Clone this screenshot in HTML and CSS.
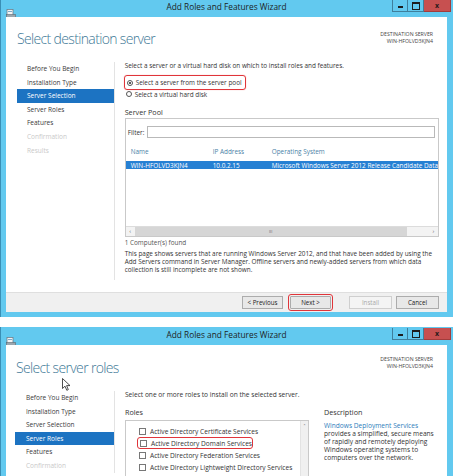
FILE: index.html
```html
<!DOCTYPE html>
<html lang="en">
  <head>
    <meta charset="UTF-8" />
    <meta name="viewport" content="width=device-width, initial-scale=1.0" />
    <title>Add Roles and Features Wizard</title>
    <link rel="stylesheet" href="styles.css">
  </head>
  <body>
    <!-- first capture: destination server -->
    <section class="window win-one">
      <header class="titlebar">
        <span class="app-icon">
          <svg width="10" height="10" viewBox="0 0 10 10">
            <rect x="1" y="0.5" width="6" height="6" fill="#f4f4f4" stroke="#6f7f8c" stroke-width="0.8" />
            <rect x="2" y="2" width="4" height="1" fill="#7ea9c8" />
            <rect x="0.5" y="5.5" width="9" height="4" fill="#9aa6ae" stroke="#5d6a74" stroke-width="0.6" />
          </svg>
        </span>
        <span class="title">Add Roles and Features Wizard</span>
        <span class="controls">
          <span class="ctl ctl-min"></span>
          <span class="ctl ctl-max"></span>
          <span class="ctl ctl-close">x</span>
        </span>
      </header>
      <div class="client">
        <div class="head">
          <h1>Select destination server</h1>
          <div class="dest">
            <div>DESTINATION SERVER</div>
            <div>WIN-HFOLVD3KJN4</div>
          </div>
        </div>
        <div class="wizard">
          <ul class="steps">
            <li>Before You Begin</li>
            <li>Installation Type</li>
            <li class="current">Server Selection</li>
            <li>Server Roles</li>
            <li>Features</li>
            <li class="off">Confirmation</li>
            <li class="off">Results</li>
          </ul>
          <div class="main">
            <p class="intro">Select a server or a virtual hard disk on which to install roles and features.</p>
            <div class="choices">
              <label class="radio marked"><span class="dot on"></span>Select a server from the server pool</label>
              <label class="radio"><span class="dot"></span>Select a virtual hard disk</label>
            </div>
            <h2 class="sub">Server Pool</h2>
            <div class="pool">
              <div class="filter">
                <span>Filter:</span>
                <span class="field"></span>
              </div>
              <div class="row cols">
                <span class="c-name">Name</span>
                <span class="c-ip">IP Address</span>
                <span class="c-os">Operating System</span>
              </div>
              <div class="row picked">
                <span class="c-name">WIN-HFOLVD3KJN4</span>
                <span class="c-ip">10.0.2.15</span>
                <span class="c-os">Microsoft Windows Server 2012 Release Candidate Data</span>
              </div>
              <div class="hscroll">
                <span class="arrow">&lsaquo;</span>
                <span class="thumb">III</span>
                <span class="track"></span>
                <span class="arrow">&rsaquo;</span>
              </div>
            </div>
            <p class="found">1 Computer(s) found</p>
            <p class="note">This page shows servers that are running Windows Server 2012, and that have been added by using the Add Servers command in Server Manager. Offline servers and newly-added servers from which data collection is still incomplete are not shown.</p>
          </div>
        </div>
      </div>
      <footer class="actions">
        <span class="btn">&lt; Previous</span>
        <span class="btn next">Next &gt;</span>
        <span class="btn disabled">Install</span>
        <span class="btn">Cancel</span>
      </footer>
    </section>

    <!-- second capture: server roles -->
    <section class="window win-two">
      <header class="titlebar">
        <span class="app-icon">
          <svg width="10" height="10" viewBox="0 0 10 10">
            <rect x="1" y="0.5" width="6" height="6" fill="#f4f4f4" stroke="#6f7f8c" stroke-width="0.8" />
            <rect x="2" y="2" width="4" height="1" fill="#7ea9c8" />
            <rect x="0.5" y="5.5" width="9" height="4" fill="#9aa6ae" stroke="#5d6a74" stroke-width="0.6" />
          </svg>
        </span>
        <span class="title">Add Roles and Features Wizard</span>
        <span class="controls">
          <span class="ctl ctl-min"></span>
          <span class="ctl ctl-max"></span>
          <span class="ctl ctl-close">x</span>
        </span>
      </header>
      <div class="client">
        <div class="head">
          <h1>Select server roles</h1>
          <div class="dest">
            <div>DESTINATION SERVER</div>
            <div>WIN-HFOLVD3KJN4</div>
          </div>
          <svg class="pointer" width="9" height="13" viewBox="0 0 9 13">
            <path d="M0.5 0.5 L0.5 10.5 L3 8.2 L4.8 12.3 L6.3 11.6 L4.6 7.6 L8 7.6 Z" fill="#fff" stroke="#222" stroke-width="0.8" stroke-linejoin="round" />
          </svg>
        </div>
        <div class="wizard">
          <ul class="steps">
            <li>Before You Begin</li>
            <li>Installation Type</li>
            <li>Server Selection</li>
            <li class="current">Server Roles</li>
            <li>Features</li>
            <li class="off">Confirmation</li>
          </ul>
          <div class="main">
            <p class="intro">Select one or more roles to install on the selected server.</p>
            <div class="roles-area">
              <div class="roles">
                <h2 class="sub">Roles</h2>
                <div class="role-list">
                  <ul>
                    <li><span class="box"></span>Active Directory Certificate Services</li>
                    <li class="marked"><span class="box"></span>Active Directory Domain Services</li>
                    <li><span class="box"></span>Active Directory Federation Services</li>
                    <li><span class="box"></span>Active Directory Lightweight Directory Services</li>
                  </ul>
                  <div class="vscroll"><span class="arrow">&#708;</span></div>
                </div>
              </div>
              <div class="desc">
                <h2 class="sub">Description</h2>
                <p><a>Windows Deployment Services</a>provides a simplified, secure means<br>of rapidly and remotely deploying<br>Windows operating systems to<br>computers over the network.</p>
              </div>
            </div>
          </div>
        </div>
      </div>
    </section>
  </body>
</html>
```

FILE: styles.css
```css
* {
  margin: 0;
  padding: 0;
  box-sizing: border-box;
}

body {
  font-family: "Open Sans", "DejaVu Sans", sans-serif;
  background-color: #fff;
  color: #333;
  width: 453px;
  height: 476px;
  overflow: hidden;
  display: flex;
  flex-direction: column;
  gap: 10px;
}

ul {
  list-style: none;
}

.window {
  background-color: #62c9ef;
  border-left: 1px solid #3a8fb5;
  padding: 0 6px 5px 5px;
  display: flex;
  flex-direction: column;
  flex-shrink: 0;
}

.win-one {
  height: 317px;
}

.win-two {
  flex: 1;
  padding-bottom: 0;
}

/* title bar */
.titlebar {
  display: grid;
  grid-template-columns: 1fr auto 1fr;
  align-items: start;
  height: 17px;
}

.win-two .titlebar {
  height: 18px;
  padding-top: 1px;
}

.app-icon {
  padding: 2px 0 0 0;
  height: 12px;
}

.title {
  font-size: 8.3px;
  line-height: 14px;
  color: #1d1d1d;
}

.controls {
  display: flex;
  justify-content: flex-end;
  margin-right: -4px;
}

.ctl {
  width: 16px;
  height: 12px;
  border: 1px solid #3f7f9c;
  border-top: none;
  display: flex;
  align-items: center;
  justify-content: center;
}

.ctl + .ctl {
  border-left: none;
}

.ctl-min::after {
  content: "";
  width: 5px;
  height: 2px;
  background-color: #1d1d1d;
  margin-top: 3px;
}

.ctl-max::after {
  content: "";
  width: 6px;
  height: 5px;
  border: 1px solid #1d1d1d;
  border-top-width: 2px;
}

.ctl-close {
  width: 27px;
  background-color: #c75050;
  border-color: #a23c3c;
  font-size: 7px;
  font-weight: 700;
  color: #2a1a1a;
}

/* client area */
.client {
  background-color: #fff;
  flex: 1;
  display: flex;
  flex-direction: column;
  overflow: hidden;
}

.head {
  display: flex;
  justify-content: space-between;
  height: 45px;
  padding: 12px 14px 0 11px;
  position: relative;
}

.win-two .head {
  height: 46px;
  padding: 13px 14px 0 10px;
}

h1 {
  font-size: 14px;
  font-weight: 300;
  line-height: 20px;
  color: #3e7896;
  letter-spacing: -0.65px;
  white-space: nowrap;
}

.dest {
  font-size: 5.2px;
  line-height: 7px;
  text-align: right;
  color: #444;
  padding-top: 2px;
}

.win-two .dest {
  margin-top: -4px;
}

.pointer {
  position: absolute;
  left: 56px;
  top: 33px;
}

.wizard {
  display: flex;
  flex: 1;
}

.steps {
  width: 110px;
  padding-left: 11px;
  border-right: 1px solid #e3e3e3;
  margin-bottom: 12px;
  font-size: 6.5px;
}

.win-two .steps {
  padding-left: 9px;
  width: 109px;
}

.steps li {
  height: 13.6px;
  line-height: 13.6px;
  padding-left: 10px;
  color: #3a3a3a;
  white-space: nowrap;
}

.win-two .steps li {
  padding-left: 11px;
}

.steps li.current {
  background-color: #1c73c2;
  color: #fff;
}

.steps li.off {
  color: #c9c9c9;
}

.main {
  flex: 1;
  padding: 0 8px 0 10px;
  font-size: 6.4px;
  color: #333;
}

.intro {
  line-height: 8px;
}

.choices {
  padding-top: 5px;
  display: flex;
  flex-direction: column;
}

.radio {
  display: flex;
  align-items: center;
  gap: 3px;
  height: 10px;
  padding-left: 1px;
}

.radio.marked {
  width: 122px;
  height: 15px;
  margin-left: -1px;
  padding-left: 2px;
  border: 1px solid #e0353a;
  border-radius: 3px;
  box-shadow: 0 0 1px #f08a8a;
  margin-bottom: -1px;
}

.dot {
  width: 6px;
  height: 6px;
  border: 1px solid #555;
  border-radius: 50%;
  display: flex;
  align-items: center;
  justify-content: center;
}

.dot.on::after {
  content: "";
  width: 2px;
  height: 2px;
  border-radius: 50%;
  background-color: #222;
}

.sub {
  font-size: 7.2px;
  font-weight: 400;
  line-height: 9px;
  color: #333;
}

.win-one .sub {
  margin-top: 8.5px;
}

.pool {
  margin-top: 1.5px;
  height: 119px;
  border: 1px solid #c9c9c9;
  display: flex;
  flex-direction: column;
}

.filter {
  display: flex;
  align-items: center;
  gap: 3px;
  padding: 7px 3px 0 2px;
}

.field {
  flex: 1;
  height: 12px;
  border: 1px solid #b9b9b9;
}

.row {
  display: flex;
  align-items: center;
  padding-left: 5px;
  white-space: nowrap;
  overflow: hidden;
}

.cols {
  height: 12px;
  margin-top: 7px;
  color: #4a7fa6;
}

.picked {
  height: 8px;
  margin-top: 4px;
  background-color: #2680d3;
  color: #fff;
}

.c-name {
  width: 82px;
  flex-shrink: 0;
}

.c-ip {
  width: 59px;
  flex-shrink: 0;
}

.hscroll {
  margin-top: auto;
  height: 10px;
  display: flex;
  border-top: 1px solid #dcdcdc;
  background-color: #f3f3f3;
  font-size: 6px;
  color: #666;
  line-height: 9px;
}

.hscroll .arrow {
  width: 9px;
  text-align: center;
}

.thumb {
  width: 272px;
  background-color: #d6d6d6;
  text-align: center;
  font-size: 4px;
}

.track {
  flex: 1;
}

.found {
  line-height: 9px;
  margin-top: 1px;
  color: #555;
}

.note {
  line-height: 8px;
  margin-top: 3px;
}

/* buttons row */
.actions {
  height: 20px;
  background-color: #f0f0f0;
  border-top: 1px solid #dfdfdf;
  display: flex;
  align-items: center;
  justify-content: flex-end;
  padding-right: 8px;
  gap: 7px;
}

.btn {
  width: 41px;
  height: 13px;
  border: 1px solid #acacac;
  background-color: #e8e8e8;
  font-size: 6.2px;
  display: flex;
  align-items: center;
  justify-content: center;
  color: #222;
}

.btn.next {
  outline: 1px solid #e0353a;
  outline-offset: 1px;
  border-radius: 1px;
  margin-right: 11px;
}

.btn.disabled {
  width: 43px;
  color: #aaa;
  background-color: #f4f4f4;
  border-color: #cfcfcf;
  margin-right: -3px;
}

.btn:last-child {
  width: 43px;
}

/* roles page */
.win-two .main {
  font-size: 6.6px;
}

.roles-area {
  display: flex;
  padding-top: 9px;
}

.roles {
  width: 184px;
}

.role-list {
  margin-top: 3px;
  height: 60px;
  border: 1px solid #c9c9c9;
  display: flex;
}

.role-list ul {
  flex: 1;
  padding: 4px 0 0 13px;
  font-size: 6.6px;
}

.role-list li {
  height: 12px;
  display: flex;
  align-items: center;
  gap: 4px;
  white-space: nowrap;
}

.role-list li.marked {
  width: 116px;
  margin-left: -2px;
  padding-left: 2px;
  border: 1px solid #e0353a;
  border-radius: 3px;
}

.box {
  width: 7px;
  height: 7px;
  border: 1px solid #777;
  background-color: #fff;
  flex-shrink: 0;
}

.vscroll {
  width: 8px;
  background-color: #f0f0f0;
  border-left: 1px solid #e3e3e3;
  font-size: 5px;
  text-align: center;
  color: #666;
  padding-top: 2px;
}

.desc {
  margin-left: 15px;
  flex: 1;
}

.desc p {
  margin-top: 5px;
  line-height: 8px;
  font-size: 6.6px;
  white-space: nowrap;
}

.desc a {
  display: block;
  color: #2f7dbb;
}
```
